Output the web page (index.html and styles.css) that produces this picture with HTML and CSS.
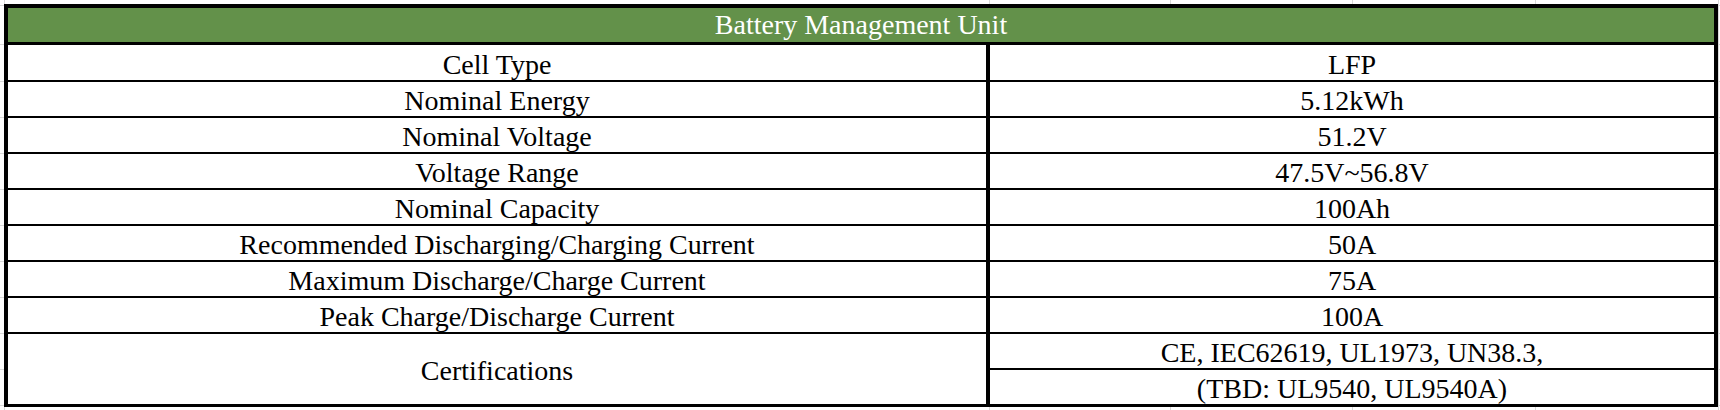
FILE: index.html
```html
<!DOCTYPE html>
<html lang="en">
<head>
<meta charset="utf-8">
<title>Battery Management Unit</title>
<link rel="stylesheet" href="styles.css">
</head>
<body>
<div class="sheet">
  <div class="title">Battery Management Unit</div>
  <div class="row first"><div class="k">Cell Type</div><div class="v">LFP</div></div>
  <div class="row"><div class="k">Nominal Energy</div><div class="v">5.12kWh</div></div>
  <div class="row"><div class="k">Nominal Voltage</div><div class="v">51.2V</div></div>
  <div class="row"><div class="k">Voltage Range</div><div class="v">47.5V~56.8V</div></div>
  <div class="row"><div class="k">Nominal Capacity</div><div class="v">100Ah</div></div>
  <div class="row"><div class="k">Recommended Discharging/Charging Current</div><div class="v">50A</div></div>
  <div class="row"><div class="k">Maximum Discharge/Charge Current</div><div class="v">75A</div></div>
  <div class="row"><div class="k">Peak Charge/Discharge Current</div><div class="v">100A</div></div>
  <div class="row cert">
    <div class="k">Certifications</div>
    <div class="vs">
      <div class="v sub top">CE, IEC62619, UL1973, UN38.3,</div>
      <div class="v sub">(TBD: UL9540, UL9540A)</div>
    </div>
  </div>
</div>
</body>
</html>
```
FILE: styles.css
```css
html, body {
  margin: 0;
  padding: 0;
}
body {
  width: 1720px;
  height: 410px;
  background-color: #fff;
  background-image:
    linear-gradient(to right,
      transparent 0, transparent 4px, #d9d9d9 4px, #d9d9d9 5px,
      transparent 5px, transparent 989px, #d9d9d9 989px, #d9d9d9 990px,
      transparent 990px, transparent 1170px, #d9d9d9 1170px, #d9d9d9 1171px,
      transparent 1171px, transparent 1352px, #d9d9d9 1352px, #d9d9d9 1353px,
      transparent 1353px, transparent 1535px, #d9d9d9 1535px, #d9d9d9 1536px,
      transparent 1536px, transparent 1718px, #d9d9d9 1718px, #d9d9d9 1719px,
      transparent 1719px),
    linear-gradient(to bottom,
      transparent 0, transparent 5px, #d9d9d9 5px, #d9d9d9 6px,
      transparent 6px, transparent 44px, #d9d9d9 44px, #d9d9d9 45px,
      transparent 45px, transparent 81px, #d9d9d9 81px, #d9d9d9 82px,
      transparent 82px, transparent 117px, #d9d9d9 117px, #d9d9d9 118px,
      transparent 118px, transparent 153px, #d9d9d9 153px, #d9d9d9 154px,
      transparent 154px, transparent 189px, #d9d9d9 189px, #d9d9d9 190px,
      transparent 190px, transparent 225px, #d9d9d9 225px, #d9d9d9 226px,
      transparent 226px, transparent 261px, #d9d9d9 261px, #d9d9d9 262px,
      transparent 262px, transparent 297px, #d9d9d9 297px, #d9d9d9 298px,
      transparent 298px, transparent 333px, #d9d9d9 333px, #d9d9d9 334px,
      transparent 334px, transparent 369px, #d9d9d9 369px, #d9d9d9 370px,
      transparent 370px, transparent 405px, #d9d9d9 405px, #d9d9d9 406px,
      transparent 406px);
  font-family: "Liberation Serif", "Times New Roman", serif;
  font-size: 28px;
  color: #000;
}
.sheet {
  margin: 4px 0 0 4px;
  width: 1714px;
  box-sizing: border-box;
  border: 4px solid #000;
  border-bottom-width: 3px;
  background: #fff;
}
.title {
  height: 34px;
  box-sizing: content-box;
  border-bottom: 3px solid #000;
  background: #63914a;
  color: #fff;
  display: flex;
  align-items: center;
  justify-content: center;
  line-height: 32px;
  padding-top: 0;
  white-space: nowrap;
}
.title span {
  display: block;
}
.row {
  display: grid;
  grid-template-columns: 982px 1fr;
  height: 36px;
  box-sizing: border-box;
  border-bottom: 2px solid #000;
}
.row.first {
  height: 37px;
}
.row.cert {
  height: 70px;
  border-bottom: 0;
}
.k, .v {
  display: flex;
  align-items: center;
  justify-content: center;
  white-space: nowrap;
  line-height: 30px;
  padding-top: 4px;
  box-sizing: border-box;
}
.k {
  border-right: 4px solid #000;
}
.vs {
  display: flex;
  flex-direction: column;
}
.sub {
  height: 34px;
}
.sub.top {
  height: 36px;
  border-bottom: 2px solid #000;
}
```
